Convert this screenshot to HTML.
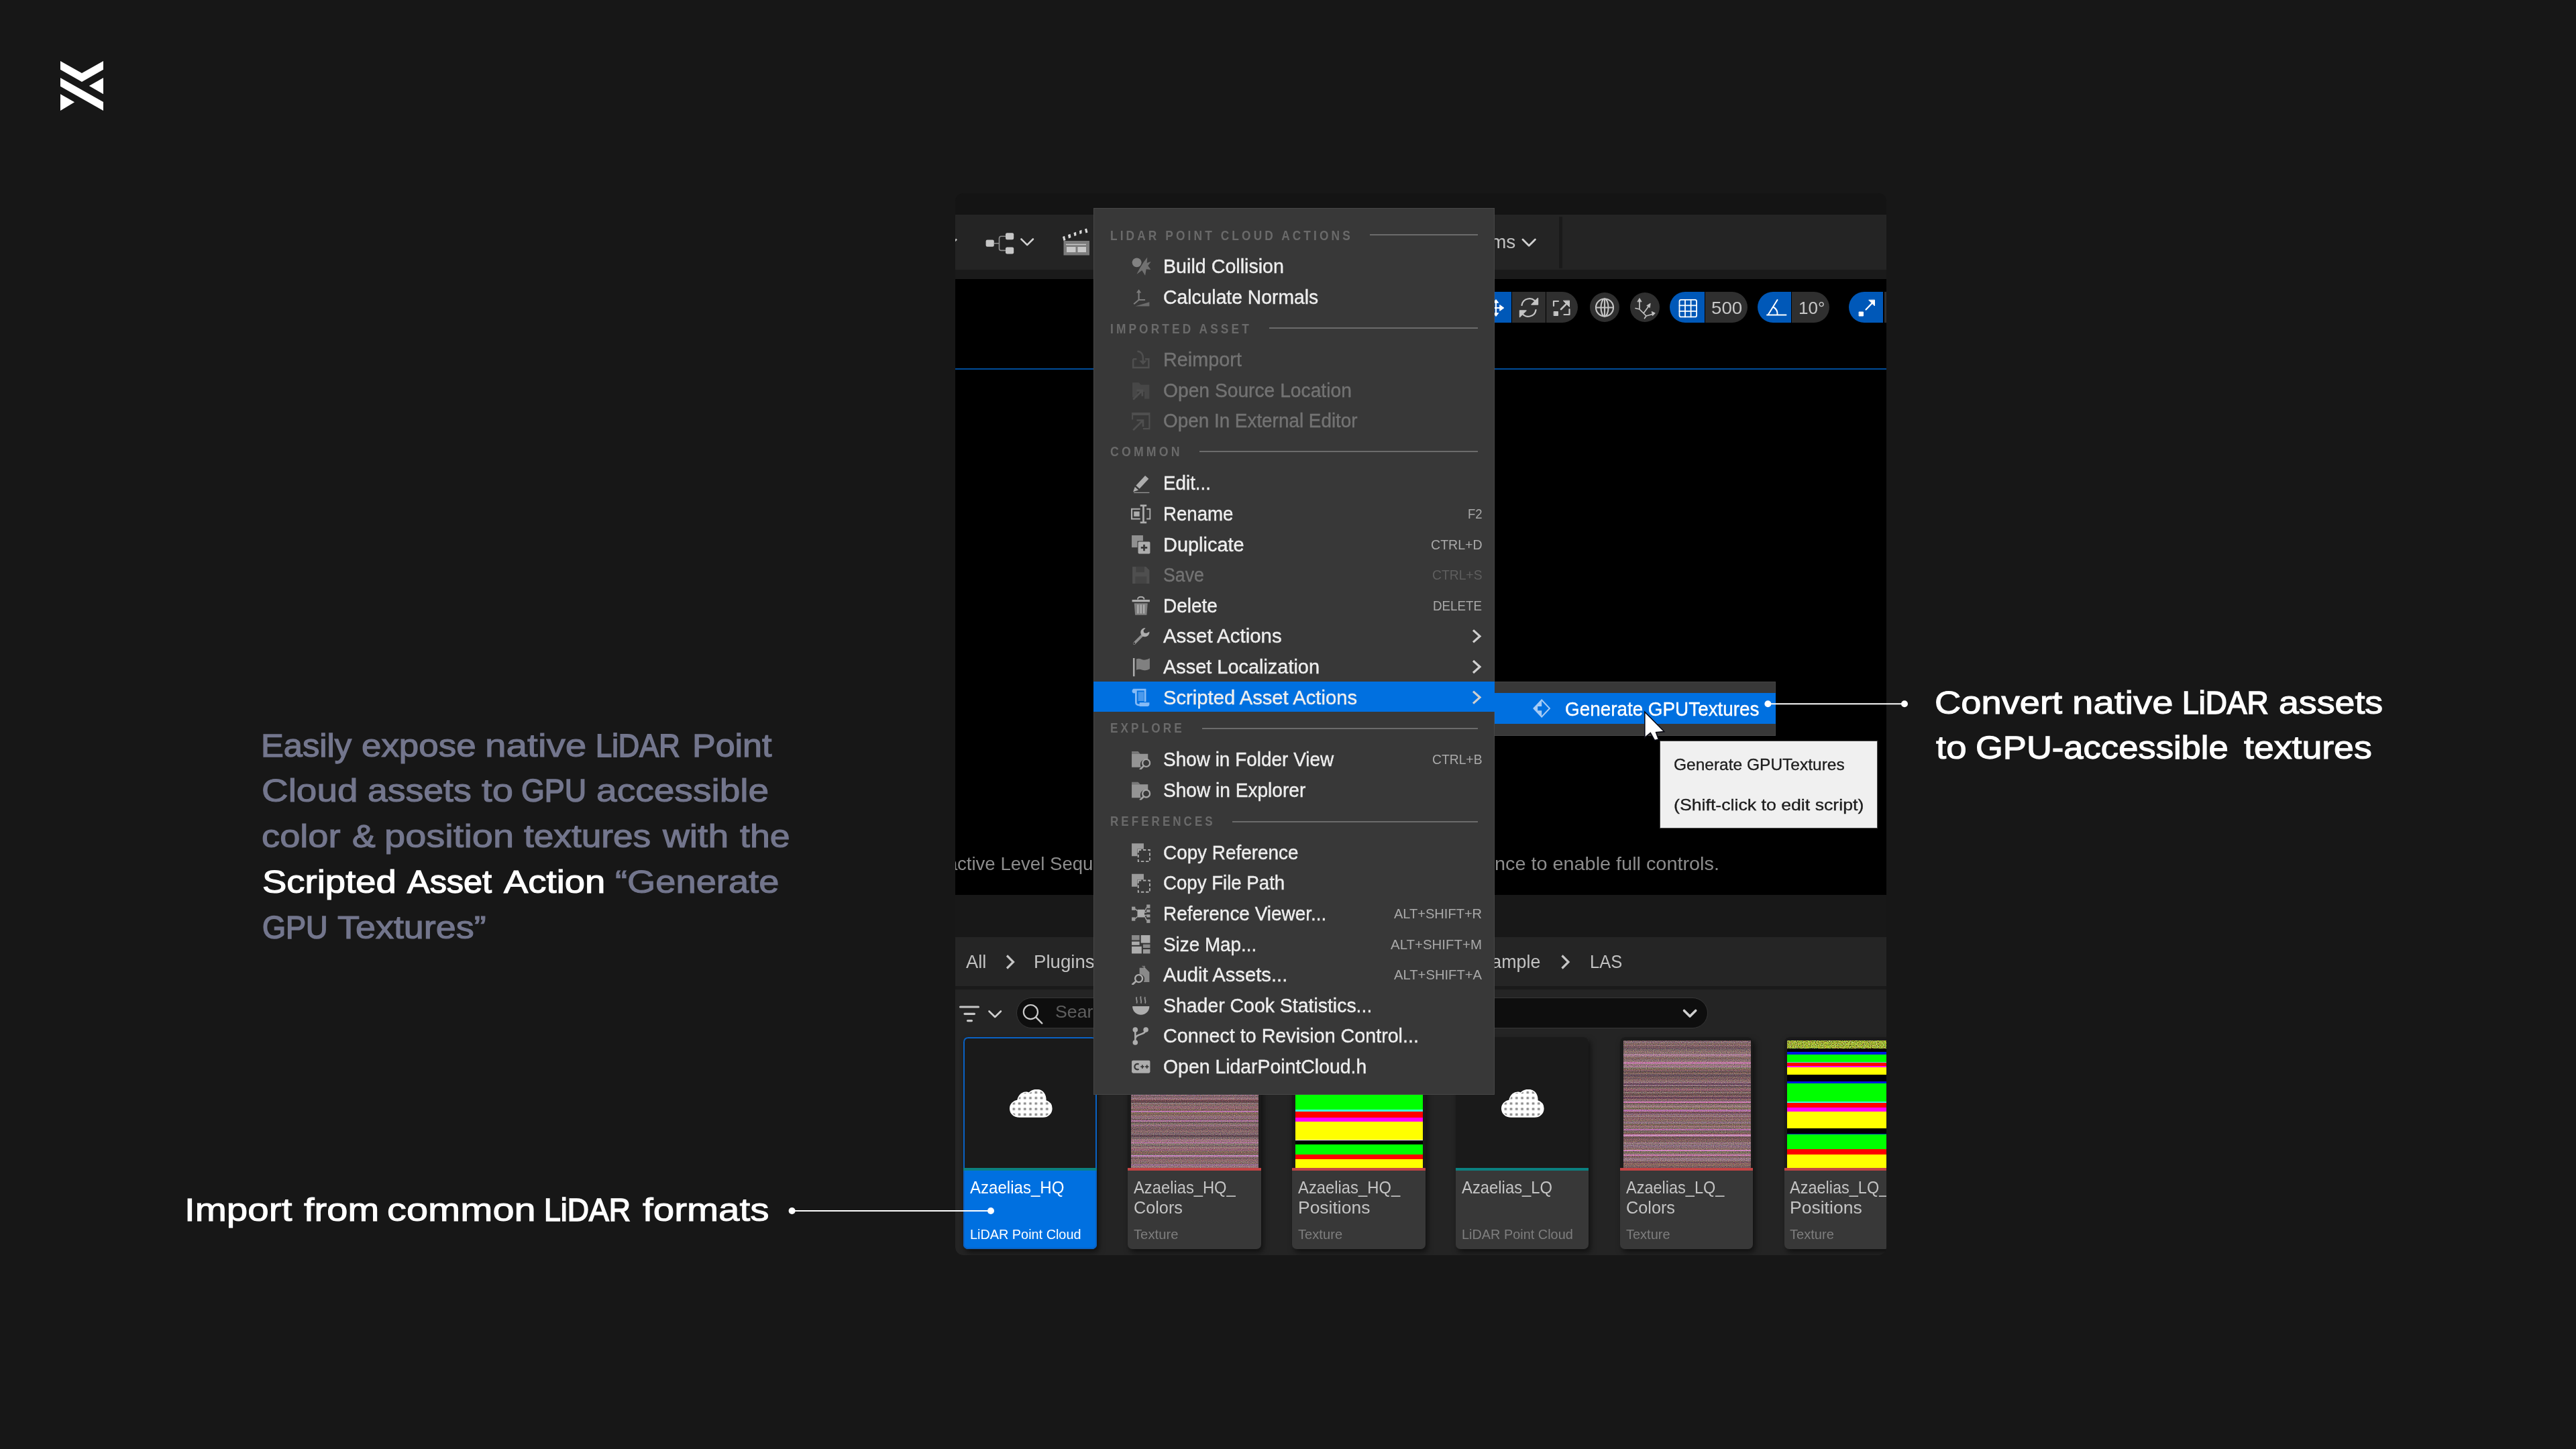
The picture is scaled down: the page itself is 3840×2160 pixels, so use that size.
<!DOCTYPE html>
<html lang="en"><head><meta charset="utf-8"><title>LiDAR Point Cloud - Generate GPU Textures</title>
<style>
html,body{margin:0;padding:0;}
body{width:3840px;height:2160px;overflow:hidden;position:relative;background:#171717;font-family:"Liberation Sans",sans-serif;}
.abs,.t,.hl,.tile,.thumb{position:absolute;}
.t{white-space:pre;line-height:1;transform-origin:0 0;margin:0;}
.hl{height:2.6px;background:#6b6b6b;}
.bm{display:inline-block;width:0;height:0;}
.tl{position:absolute;left:0;top:0;width:3840px;height:2160px;will-change:transform;}
#shot{position:absolute;left:1424px;top:288px;width:1388px;height:1583px;overflow:hidden;border-radius:12px;background:#141414;}
#shotin{position:absolute;left:-1424px;top:-288px;width:3840px;height:2160px;}
.tile{top:1546px;height:316px;border-radius:7px;background:#383838;box-shadow:3px 5px 8px rgba(0,0,0,.55);overflow:hidden;}
.thumb{left:0;top:0;right:0;height:195px;background:#1a1a1a;}
.tex{position:absolute;left:4.8px;width:190.2px;top:4.8px;height:190.2px;}
.bar{position:absolute;left:0;right:0;top:195px;height:4px;}
.vb{position:absolute;top:435.3px;height:45.8px;background:#2f2f2f;}
</style></head><body>
<svg class="abs" style="left:0;top:0" width="260" height="260" viewBox="0 0 260 260" aria-label="logo">
<g fill="#ffffff">
<polygon points="90,91.1 122,109.1 154,91.1 154,103.8 122,122 90,103.8"/>
<polygon points="90,116 154,152.1 154,165.1 90,128.7"/>
<polygon points="154,115.9 154,140.2 132.8,128"/>
<polygon points="90,140.3 90,165.1 111.1,152.3"/>
</g></svg>
<div id="shot"><div id="shotin">

<div class="abs" style="left:1424px;top:319.600px;width:1388px;height:82.200px;background:#242424"></div>
<div class="abs" style="left:2324.200px;top:322.800px;width:5px;height:77.600px;background:#1a1a1a"></div>
<div class="abs" style="left:1424px;top:401.800px;width:1388px;height:14px;background:#1a1a1a"></div>
<div class="abs" style="left:1424px;top:415.600px;width:1388px;height:918.200px;background:#000"></div>
<div class="abs" style="left:1424px;top:549.400px;width:1388px;height:1.800px;background:#004c99"></div>
<div class="abs" style="left:1424px;top:1333.800px;width:1388px;height:63.400px;background:#181818"></div>
<div class="abs" style="left:1424px;top:1397px;width:1388px;height:72.800px;background:#252525"></div>
<div class="abs" style="left:1424px;top:1469.800px;width:1388px;height:5px;background:#1a1a1a"></div>
<div class="abs" style="left:1424px;top:1474.700px;width:1388px;height:400px;background:#242424"></div>
<div class="abs" style="left:1515px;top:1487.300px;width:1030.500px;height:46px;box-sizing:border-box;border:1.600px solid #363636;border-radius:23px;background:#0e0e0e"></div>
<div class="vb" style="left:2200px;width:52.600px;background:#0058b8"></div>
<div class="vb" style="left:2254.400px;width:49.200px"></div>
<div class="vb" style="left:2305.200px;width:47px;border-radius:0 23px 23px 0"></div>
<div class="vb" style="left:2370.200px;width:43.800px;top:436.400px;height:43.800px;border-radius:22px"></div>
<div class="vb" style="left:2430.100px;width:43.800px;top:436.400px;height:43.800px;border-radius:22px"></div>
<div class="vb" style="left:2489px;width:51.500px;border-radius:23px 0 0 23px;background:#0058b8"></div>
<div class="vb" style="left:2542px;width:62.700px;border-radius:0 23px 23px 0"></div>
<div class="vb" style="left:2619.900px;width:49.900px;border-radius:23px 0 0 23px;background:#0058b8"></div>
<div class="vb" style="left:2671.400px;width:55.400px;border-radius:0 23px 23px 0"></div>
<div class="vb" style="left:2755.900px;width:51.100px;border-radius:23px 0 0 23px;background:#0058b8"></div>
<div class="vb" style="left:2808.600px;width:30px"></div>
<svg class="abs" style="left:0;top:0" width="3840" height="2160" viewBox="0 0 3840 2160" fill="none" stroke="#c4c4c4" stroke-width="2.2" stroke-linecap="round" stroke-linejoin="round">
<!-- translate (partially hidden) -->
<g stroke="#ffffff" stroke-width="2"><path d="M2226 459h11M2230 449v20"/><path d="M2236 454.800l5.800 4.200-5.800 4.200Z" fill="#fff" stroke-width="1"/><path d="M2226.500 451l3.500-4.500 3.500 4.500ZM2226.500 467l3.500 4.500 3.500-4.500Z" fill="#fff" stroke-width="1"/></g>
<!-- rotate -->
<path d="M2268.500 455a11.500 11.500 0 0 1 21-4.500M2289.500 462a11.500 11.500 0 0 1-21 4.500"/>
<path d="M2292.500 444.500v9.500h-9.500ZM2265.500 472.500v-9.500h9.500Z" fill="#c4c4c4" stroke-width="1.400"/>
<!-- scale -->
<path d="M2316 456v-7h7M2339.500 461v8h-8"/><rect x="2316.500" y="464.500" width="6" height="6" fill="#c4c4c4" stroke-width="1"/>
<path d="M2327 461l10-10" stroke-width="2.600"/><path d="M2339.500 448.500v9l-9-9Z" fill="#c4c4c4" stroke-width="1"/>
<!-- globe -->
<circle cx="2392" cy="458.500" r="13"/><ellipse cx="2392" cy="458.500" rx="5.500" ry="13"/><path d="M2379 458.500h26M2392 445.500v26"/>
<!-- surface snapping -->
<g stroke-width="1.700"><path d="M2444 461v-13M2444 461l-6-1.500M2444 461l10 10M2454 471l10.500-3M2454 471l-2.500 3.500M2450 467l8-11"/>
<path d="M2441 449.500l3-5 3 5ZM2455 455.500l5.200-3.200-.800 6ZM2462.500 464.500l4.800 2.300-3.600 3.800Z" fill="#c4c4c4" stroke-width=".800"/></g>
<!-- grid -->
<g stroke="#ffffff" stroke-width="1.800"><rect x="2503.500" y="446.800" width="25.600" height="25.600" rx="2.500"/><path d="M2512 446.800v25.600M2520.600 446.800v25.600M2503.500 455.300h25.600M2503.500 463.900h25.600"/></g>
<!-- angle -->
<g stroke="#ffffff" stroke-width="2"><path d="M2634 469.500h28.500M2635.500 469.500l14-22.500M2643 457.500a12 12 0 0 1 6.500 12"/></g>
<!-- scale snap -->
<g stroke="#ffffff" stroke-width="2.200"><rect x="2771.500" y="465" width="6" height="6" fill="#fff" stroke-width="1"/><path d="M2781.500 461.500l10.500-11"/><path d="M2794.500 447.500v8.500l-8.500-8.500Z" fill="#fff" stroke-width="1"/></g>
</svg>
<svg class="abs" style="left:0;top:0" width="3840" height="2160" viewBox="0 0 3840 2160" fill="none">
<!-- left chevron fragment -->
<path d="M1414 356.500l6 6 6-6" stroke="#c4c4c4" stroke-width="2.600"/>
<!-- blueprint tree icon -->
<g fill="#c6c6c6"><rect x="1469.600" y="357.600" width="12.200" height="10.200" rx="2.200"/><rect x="1499" y="347.200" width="12.200" height="10" rx="2.200"/><rect x="1499" y="368.400" width="12.200" height="10" rx="2.200"/></g>
<path d="M1481.800 362.700h7M1499 352.200h-6.500a3 3 0 0 0-3 3v15.200a3 3 0 0 0 3 3h6.500" stroke="#8e8e8e" stroke-width="1.600"/>
<path d="M1522.500 356.500l8.700 8.600 8.700-8.600" stroke="#d0d0d0" stroke-width="2.600" stroke-linecap="round" stroke-linejoin="round"/>
<!-- clapper -->
<rect x="1585.500" y="359" width="38.500" height="21.500" fill="#7c7c7c"/>
<path d="M1589 364.500h30" stroke="#c8c8c8" stroke-width="1.600"/>
<rect x="1590" y="368" width="13.500" height="8" fill="#c8c8c8"/><rect x="1606.500" y="368" width="12.500" height="8" fill="#c8c8c8"/>
<g fill="#d8d8d8"><polygon points="1584,353 1587,351.800 1588.500,358 1585.500,359"/><polygon points="1592,350 1595.500,348.800 1596.500,354 1593,355.500"/><polygon points="1600.500,347 1604,345.800 1604.500,351 1601.500,352"/><polygon points="1609,344 1612.500,342.800 1612.500,348 1609.500,349"/><polygon points="1617,341.500 1620,340.500 1621.500,346.500 1618.500,347.500"/></g>
<!-- Platforms chevron -->
<path d="M2270 357l9.200 9.200 9.200-9.200" stroke="#d0d0d0" stroke-width="2.800" stroke-linecap="round" stroke-linejoin="round"/>
<!-- breadcrumb chevrons -->
<g stroke="#c6c6c6" stroke-width="3.200"><path d="M1501 1424.500l9.500 9.500-9.500 9.500"/><path d="M2328.500 1424.500l9.500 9.500-9.500 9.500"/></g>
<!-- filter icon -->
<g stroke="#c6c6c6" stroke-width="3.200" stroke-linecap="round"><path d="M1431.500 1501h27M1438 1511.300h14.500M1442.500 1521.600h6"/></g>
<path d="M1474.500 1507.500l8.700 8.500 8.700-8.500" stroke="#d0d0d0" stroke-width="2.600" stroke-linecap="round" stroke-linejoin="round"/>
<!-- search glass -->
<circle cx="1536.400" cy="1508.600" r="10.600" stroke="#cacaca" stroke-width="2.200"/><path d="M1544.200 1516.400l9 9" stroke="#cacaca" stroke-width="2.400" stroke-linecap="round"/>
<!-- dropdown chevron -->
<path d="M2510.500 1506.500l8.600 8.600 8.600-8.600" stroke="#cfcfcf" stroke-width="3.600" stroke-linecap="round" stroke-linejoin="round"/>
</svg>
<div class="tile" style="left:1436.0px;width:199.0px;background:#0070e0;box-shadow:inset 0 0 0 2px #0a62c4,3px 5px 8px rgba(0,0,0,.55);"><div class="thumb"></div><div class="bar" style="background:#0b8080"></div><div class="abs" style="left:0;top:0;right:0;height:195px;border:2px solid #0a62c4;border-bottom:0;border-radius:7px 7px 0 0;box-sizing:border-box"></div></div><svg class="abs" style="left:1504.5px;top:1624px" width="64" height="42" viewBox="0 0 64 42">
<defs><pattern id="dots0" x="2.1" y="0.6" width="8.25" height="8.2" patternUnits="userSpaceOnUse"><rect width="8.25" height="8.2" fill="#ffffff"/><rect x="2.4" y="2.2" width="3.6" height="3.6" rx=".6" fill="#8c8c8c"/></pattern></defs>
<path d="M14.5 41C6.500 41 .8 35.6 .8 28.4c0-6.5 4.800-11 11.200-12.200C13.600 8 19.500 3.600 26 4.400c1 .100 2 .500 2.800 1.200C31.500 2.200 35.8.6 40.500 .6c8.500 0 13.500 6.400 13.300 16.200 5.500 1.800 9 6 9 11.600C62.800 35.500 57 41 49.600 41Z" fill="url(#dots0)" stroke="#ffffff" stroke-width="1.6"/>
</svg><div class="tile" style="left:1681.4px;width:198.3px;"><div class="thumb"><div class="tex" style="background:linear-gradient(180deg,#826c65 0.0px,#826c65 1.6px,#826659 1.6px,#826659 4.0px,#71465a 4.0px,#71465a 6.4px,#7d6a5a 6.4px,#7d6a5a 8.4px,#6a4657 8.4px,#6a4657 9.6px,#8e7369 9.6px,#8e7369 10.8px,#88695a 10.8px,#88695a 12.8px,#755b61 12.8px,#755b61 15.2px,#a07988 15.2px,#a07988 16.4px,#816664 16.4px,#816664 18.0px,#7d6c63 18.0px,#7d6c63 21.0px,#cf82be 21.0px,#cf82be 22.6px,#6e4c55 22.6px,#6e4c55 25.6px,#776962 25.6px,#776962 28.0px,#7a6661 28.0px,#7a6661 29.6px,#8b726a 29.6px,#8b726a 32.0px,#907888 32.0px,#907888 35.0px,#b67d9f 35.0px,#b67d9f 36.6px,#786665 36.6px,#786665 39.0px,#816060 39.0px,#816060 41.4px,#876967 41.4px,#876967 43.8px,#886564 43.8px,#886564 45.0px,#76685d 45.0px,#76685d 46.2px,#69494c 46.2px,#69494c 48.2px,#664958 48.2px,#664958 49.8px,#846b76 49.8px,#846b76 51.8px,#826362 51.8px,#826362 53.8px,#7f565f 53.8px,#7f565f 56.8px,#89707a 56.8px,#89707a 58.0px,#8a6e61 58.0px,#8a6e61 60.4px,#b07ca8 60.4px,#b07ca8 63.4px,#684c4d 63.4px,#684c4d 65.8px,#67494f 65.8px,#67494f 67.8px,#7a6160 67.8px,#7a6160 70.2px,#90656e 70.2px,#90656e 73.2px,#876669 73.2px,#876669 74.8px,#7f7065 74.8px,#7f7065 76.0px,#8c6d62 76.0px,#8c6d62 77.2px,#8e727f 77.2px,#8e727f 78.8px,#906d79 78.8px,#906d79 80.4px,#916e7c 80.4px,#916e7c 83.4px,#785e62 83.4px,#785e62 85.0px,#95727c 85.0px,#95727c 88.0px,#8f6865 88.0px,#8f6865 89.2px,#6a444e 89.2px,#6a444e 91.2px,#664d4e 91.2px,#664d4e 93.2px,#8d767a 93.2px,#8d767a 95.2px,#896462 95.2px,#896462 96.4px,#816a69 96.4px,#816a69 97.6px,#926771 97.6px,#926771 100.6px,#916e73 100.6px,#916e73 102.2px,#80635c 102.2px,#80635c 105.2px,#bc78b1 105.2px,#bc78b1 107.2px,#806c58 107.2px,#806c58 110.2px,#805960 110.2px,#805960 111.4px,#8f6f6a 111.4px,#8f6f6a 113.0px,#906f7d 113.0px,#906f7d 114.6px,#926474 114.6px,#926474 115.8px,#8b7277 115.8px,#8b7277 117.4px,#7b5d62 117.4px,#7b5d62 119.4px,#b277a5 119.4px,#b277a5 120.6px,#786858 120.6px,#786858 121.8px,#674b59 121.8px,#674b59 123.0px,#7d7064 123.0px,#7d7064 125.4px,#95717c 125.4px,#95717c 126.6px,#936b82 126.6px,#936b82 128.2px,#7e6164 128.2px,#7e6164 131.2px,#785b61 131.2px,#785b61 134.2px,#8b6a6c 134.2px,#8b6a6c 136.6px,#7a6466 136.6px,#7a6466 139.0px,#8f7081 139.0px,#8f7081 140.2px,#766161 140.2px,#766161 141.4px,#624852 141.4px,#624852 144.4px,#7c6769 144.4px,#7c6769 146.8px,#9a7679 146.8px,#9a7679 148.0px,#9f7385 148.0px,#9f7385 149.6px,#987379 149.6px,#987379 151.6px,#bb75ae 151.6px,#bb75ae 152.8px,#99777d 152.8px,#99777d 154.4px,#83746e 154.4px,#83746e 156.8px,#6a475b 156.8px,#6a475b 158.4px,#967877 158.4px,#967877 160.8px,#946472 160.8px,#946472 163.8px,#886478 163.8px,#886478 165.0px,#836c5b 165.0px,#836c5b 166.6px,#815c5b 166.6px,#815c5b 168.6px,#79695e 168.6px,#79695e 171.0px,#c486c0 171.0px,#c486c0 172.6px,#8b6a70 172.6px,#8b6a70 175.0px,#785e61 175.0px,#785e61 176.6px,#8e696d 176.6px,#8e696d 179.6px,#8a6e70 179.6px,#8a6e70 182.0px,#806762 182.0px,#806762 184.0px,#946e88 184.0px,#946e88 187.0px,#97787d 187.0px,#97787d 189.0px,#927075 189.0px,#927075 190.2px)"></div><svg class="abs" style="left:4.8px;top:4.8px;mix-blend-mode:overlay;opacity:.5" width="190.2" height="190.2"><rect width="190.2" height="190.2" filter="url(#grain)"/></svg></div><div class="bar" style="background:#c24444"></div></div><div class="tile" style="left:1926.3px;width:198.3px;"><div class="thumb"><div class="tex" style="background:linear-gradient(180deg,#a6bc28 0.0px,#a6bc28 11.2px,#000008 11.2px,#000008 17.2px,#0018e0 17.2px,#0018e0 21.2px,#00ff00 21.2px,#00ff00 32.2px,#40ffe0 32.2px,#40ffe0 33.6px,#ff0000 33.6px,#ff0000 38.2px,#ff00ff 38.2px,#ff00ff 40.0px,#ffff00 40.0px,#ffff00 50.7px,#000010 50.7px,#000010 62.2px,#00ff00 62.2px,#00ff00 103.0px,#40ffe0 103.0px,#40ffe0 106.2px,#ff0000 106.2px,#ff0000 114.8px,#ff00ff 114.8px,#ff00ff 120.8px,#ffff00 120.8px,#ffff00 147.7px,#fffff0 147.7px,#fffff0 149.2px,#000000 149.2px,#000000 155.3px,#00ff00 155.3px,#00ff00 170.5px,#ff0000 170.5px,#ff0000 176.8px,#ffff00 176.8px,#ffff00 190.2px)"></div><svg class="abs" style="left:4.8px;top:4.8px;mix-blend-mode:hard-light" width="190.2" height="11.8"><rect width="190.2" height="11.8" filter="url(#grain)"/></svg></div><div class="bar" style="background:#c24444"></div></div><div class="tile" style="left:2170.0px;width:198.3px;"><div class="thumb"></div><div class="bar" style="background:#0b8080"></div></div><svg class="abs" style="left:2238.0px;top:1624px" width="64" height="42" viewBox="0 0 64 42">
<defs><pattern id="dots3" x="2.1" y="0.6" width="8.25" height="8.2" patternUnits="userSpaceOnUse"><rect width="8.25" height="8.2" fill="#ffffff"/><rect x="2.4" y="2.2" width="3.6" height="3.6" rx=".6" fill="#8c8c8c"/></pattern></defs>
<path d="M14.5 41C6.500 41 .8 35.6 .8 28.4c0-6.5 4.800-11 11.200-12.200C13.600 8 19.500 3.600 26 4.400c1 .100 2 .500 2.800 1.200C31.500 2.200 35.8.6 40.500 .6c8.500 0 13.500 6.400 13.300 16.200 5.500 1.800 9 6 9 11.600C62.800 35.500 57 41 49.600 41Z" fill="url(#dots3)" stroke="#ffffff" stroke-width="1.6"/>
</svg><div class="tile" style="left:2414.8px;width:198.3px;"><div class="thumb"><div class="tex" style="background:linear-gradient(180deg,#694f54 0.0px,#694f54 1.2px,#896f76 1.2px,#896f76 4.2px,#806660 4.2px,#806660 7.2px,#98727e 7.2px,#98727e 8.4px,#775b5f 8.4px,#775b5f 10.8px,#694a5c 10.8px,#694a5c 12.4px,#776465 12.4px,#776465 15.4px,#8b6f6d 15.4px,#8b6f6d 18.4px,#8c7272 18.4px,#8c7272 20.8px,#cc8fc0 20.8px,#cc8fc0 22.4px,#98767d 22.4px,#98767d 25.4px,#80655f 25.4px,#80655f 28.4px,#856c71 28.4px,#856c71 30.4px,#907472 30.4px,#907472 32.4px,#bd79a4 32.4px,#bd79a4 35.4px,#927678 35.4px,#927678 37.8px,#b3719f 37.8px,#b3719f 39.4px,#937c7c 39.4px,#937c7c 41.4px,#7b6d5b 41.4px,#7b6d5b 43.4px,#81605c 43.4px,#81605c 44.6px,#856275 44.6px,#856275 45.8px,#63504a 45.8px,#63504a 47.8px,#876863 47.8px,#876863 50.2px,#755f62 50.2px,#755f62 51.4px,#654e58 51.4px,#654e58 53.8px,#7d6260 53.8px,#7d6260 56.8px,#6e4c59 56.8px,#6e4c59 58.0px,#8a6c6a 58.0px,#8a6c6a 61.0px,#907079 61.0px,#907079 64.0px,#634358 64.0px,#634358 66.0px,#91737f 66.0px,#91737f 67.6px,#654b52 67.6px,#654b52 70.0px,#806863 70.0px,#806863 72.4px,#946471 72.4px,#946471 74.8px,#654350 74.8px,#654350 76.0px,#846962 76.0px,#846962 77.2px,#86716f 77.2px,#86716f 78.8px,#6b504f 78.8px,#6b504f 81.8px,#816066 81.8px,#816066 83.0px,#957172 83.0px,#957172 84.2px,#6a465a 84.2px,#6a465a 86.6px,#846658 86.6px,#846658 87.8px,#936a79 87.8px,#936a79 89.0px,#7d6266 89.0px,#7d6266 91.4px,#d083b8 91.4px,#d083b8 93.0px,#704c4f 93.0px,#704c4f 94.2px,#776f5f 94.2px,#776f5f 95.4px,#856869 95.4px,#856869 97.4px,#9d7b81 97.4px,#9d7b81 100.4px,#7e6d58 100.4px,#7e6d58 102.8px,#b372a9 102.8px,#b372a9 105.8px,#87625c 105.8px,#87625c 107.4px,#704d56 107.4px,#704d56 108.6px,#8d6c7f 108.6px,#8d6c7f 111.0px,#8a685f 111.0px,#8a685f 112.2px,#977883 112.2px,#977883 113.8px,#846062 113.8px,#846062 116.8px,#936a76 116.8px,#936a76 118.4px,#856b60 118.4px,#856b60 120.4px,#876a6e 120.4px,#876a6e 121.6px,#907686 121.6px,#907686 124.0px,#7b6356 124.0px,#7b6356 127.0px,#9c727b 127.0px,#9c727b 129.4px,#866c68 129.4px,#866c68 131.8px,#b470ab 131.8px,#b470ab 134.2px,#77645e 134.2px,#77645e 136.6px,#786f60 136.6px,#786f60 137.8px,#80565a 137.8px,#80565a 140.2px,#c98cb8 140.2px,#c98cb8 143.2px,#705455 143.2px,#705455 144.8px,#64514d 144.8px,#64514d 146.4px,#805c61 146.4px,#805c61 149.4px,#7f625e 149.4px,#7f625e 151.8px,#997888 151.8px,#997888 153.8px,#86705e 153.8px,#86705e 155.0px,#8b6f80 155.0px,#8b6f80 158.0px,#8b6b75 158.0px,#8b6b75 161.0px,#846b5c 161.0px,#846b5c 163.4px,#cf85bf 163.4px,#cf85bf 165.4px,#7a6e5c 165.4px,#7a6e5c 167.8px,#8b7170 167.8px,#8b7170 169.8px,#c77cac 169.8px,#c77cac 171.8px,#7e6262 171.8px,#7e6262 173.4px,#826064 173.4px,#826064 175.4px,#927781 175.4px,#927781 177.4px,#957681 177.4px,#957681 179.8px,#846c5e 179.8px,#846c5e 181.0px,#694257 181.0px,#694257 182.2px,#866969 182.2px,#866969 183.4px,#89635e 183.4px,#89635e 185.0px,#876b62 185.0px,#876b62 186.6px,#816164 186.6px,#816164 187.8px,#735a5d 187.8px,#735a5d 189.8px,#88686c 189.8px,#88686c 190.2px)"></div><svg class="abs" style="left:4.8px;top:4.8px;mix-blend-mode:overlay;opacity:.5" width="190.2" height="190.2"><rect width="190.2" height="190.2" filter="url(#grain)"/></svg></div><div class="bar" style="background:#c24444"></div></div><div class="tile" style="left:2659.6px;width:198.3px;"><div class="thumb"><div class="tex" style="background:linear-gradient(180deg,#a6bc28 0.0px,#a6bc28 11.9px,#000008 11.9px,#000008 17.4px,#0018e0 17.4px,#0018e0 21.0px,#00ff00 21.0px,#00ff00 31.9px,#40ffe0 31.9px,#40ffe0 33.2px,#ff0000 33.2px,#ff0000 37.8px,#ff00ff 37.8px,#ff00ff 40.0px,#ffff00 40.0px,#ffff00 51.0px,#000004 51.0px,#000004 61.0px,#0018e0 61.0px,#0018e0 64.4px,#00ff00 64.4px,#00ff00 90.6px,#40ffe0 90.6px,#40ffe0 92.6px,#ff0000 92.6px,#ff0000 100.0px,#ff00ff 100.0px,#ff00ff 105.7px,#ffff00 105.7px,#ffff00 131.1px,#000000 131.1px,#000000 138.8px,#0018c0 138.8px,#0018c0 140.2px,#00ff00 140.2px,#00ff00 162.2px,#ff0000 162.2px,#ff0000 170.2px,#ffff00 170.2px,#ffff00 190.2px)"></div><svg class="abs" style="left:4.8px;top:4.8px;mix-blend-mode:hard-light" width="190.2" height="11.8"><rect width="190.2" height="11.8" filter="url(#grain)"/></svg></div><div class="bar" style="background:#c24444"></div></div>

<div class="tl"><span id="t73" class="t " style="left:2141.00px;top:347.0px;font-size:27.5px;color:#c0c0c0;transform:scaleX(1.0186);">Platforms</span>
<span id="t74" class="t " style="left:2550.60px;top:446.0px;font-size:26.5px;color:#c8c8c8;transform:scaleX(1.0448);">500</span>
<span id="t75" class="t " style="left:2680.60px;top:446.0px;font-size:26.5px;color:#c8c8c8;transform:scaleX(0.9831);">10°</span>
<span id="t76" class="t " style="left:1411.50px;top:1273.0px;font-size:28.5px;color:#8c8c8c;">a</span>
<span id="t77" class="t " style="left:1427.20px;top:1273.0px;font-size:28.5px;color:#8c8c8c;transform:scaleX(0.9678);">ctive Level Sequ</span>
<span id="t78" class="t " style="left:2227.80px;top:1273.0px;font-size:28.5px;color:#8c8c8c;transform:scaleX(1.0114);">nce to enable full controls.</span>
<span id="t79" class="t " style="left:1440.40px;top:1420.0px;font-size:28px;color:#c2c2c2;transform:scaleX(0.9735);">All</span>
<span id="t80" class="t " style="left:1541.40px;top:1420.0px;font-size:28px;color:#c2c2c2;transform:scaleX(0.9865);">Plugins</span>
<span id="t81" class="t " style="left:2192.00px;top:1420.0px;font-size:28px;color:#c2c2c2;transform:scaleX(0.9574);">Example</span>
<span id="t82" class="t " style="left:2369.60px;top:1420.0px;font-size:28px;color:#c2c2c2;transform:scaleX(0.9124);">LAS</span>
<span id="t83" class="t " style="left:1572.60px;top:1496.0px;font-size:25.5px;color:#5e5e5e;transform:scaleX(1.0490);">Search LAS</span>
<span id="t84" class="t " style="left:1445.50px;top:1758.0px;font-size:25.5px;color:#ffffff;transform:scaleX(0.9440);">Azaelias_HQ</span>
<span id="t85" class="t " style="left:1445.50px;top:1829.0px;font-size:21px;color:#ffffff;transform:scaleX(0.9452);">LiDAR Point Cloud</span>
<span id="t86" class="t " style="left:1689.80px;top:1758.0px;font-size:25.5px;color:#c4c4c4;transform:scaleX(0.9313);">Azaelias_HQ_</span>
<span id="t87" class="t " style="left:1689.80px;top:1788.0px;font-size:25.5px;color:#c4c4c4;transform:scaleX(0.9893);">Colors</span>
<span id="t88" class="t " style="left:1689.80px;top:1829.0px;font-size:21px;color:#7e7e7e;transform:scaleX(0.9641);">Texture</span>
<span id="t89" class="t " style="left:1934.80px;top:1758.0px;font-size:25.5px;color:#c4c4c4;transform:scaleX(0.9337);">Azaelias_HQ_</span>
<span id="t90" class="t " style="left:1934.80px;top:1788.0px;font-size:25.5px;color:#c4c4c4;transform:scaleX(1.0378);">Positions</span>
<span id="t91" class="t " style="left:1934.80px;top:1829.0px;font-size:21px;color:#7e7e7e;transform:scaleX(0.9597);">Texture</span>
<span id="t92" class="t " style="left:2178.60px;top:1758.0px;font-size:25.5px;color:#c4c4c4;transform:scaleX(0.9343);">Azaelias_LQ</span>
<span id="t93" class="t " style="left:2178.60px;top:1829.0px;font-size:21px;color:#7e7e7e;transform:scaleX(0.9469);">LiDAR Point Cloud</span>
<span id="t94" class="t " style="left:2423.60px;top:1758.0px;font-size:25.5px;color:#c4c4c4;transform:scaleX(0.9215);">Azaelias_LQ_</span>
<span id="t95" class="t " style="left:2423.60px;top:1788.0px;font-size:25.5px;color:#c4c4c4;transform:scaleX(0.9907);">Colors</span>
<span id="t96" class="t " style="left:2423.60px;top:1829.0px;font-size:21px;color:#7e7e7e;transform:scaleX(0.9510);">Texture</span>
<span id="t97" class="t " style="left:2668.30px;top:1758.0px;font-size:25.5px;color:#c4c4c4;transform:scaleX(0.9209);">Azaelias_LQ_</span>
<span id="t98" class="t " style="left:2668.30px;top:1788.0px;font-size:25.5px;color:#c4c4c4;transform:scaleX(1.0407);">Positions</span>
<span id="t99" class="t " style="left:2668.30px;top:1829.0px;font-size:21px;color:#7e7e7e;transform:scaleX(0.9568);">Texture</span></div>
</div></div>
<svg width="0" height="0" style="position:absolute"><defs>
<filter id="grain" x="0" y="0" width="100%" height="100%" color-interpolation-filters="sRGB"><feTurbulence type="fractalNoise" baseFrequency="0.9 0.8" numOctaves="1" seed="7"/><feColorMatrix type="matrix" values="1.5 .5 0 0 -0.5  .6 1.4 0 0 -0.5  .6 .5 .9 0 -0.5  0 0 0 0 1"/></filter>
<symbol id="i-collision" viewBox="0 0 28 28"><path d="M17.500 8.500l5.500-7.500-.500 8 6-2-4.500 6 4 5.500-6.500-.500-1.500 9-4.500-7.500-7.500 5.500 4.500-8.500Z" fill="currentColor" opacity=".78"/><circle cx="8.200" cy="8.500" r="6.600" fill="currentColor"/></symbol>
<symbol id="i-normals" viewBox="0 0 28 28"><path d="M11 3l3.500 5h-2.500v10h-2v-10h-2.500Z" fill="currentColor"/><path d="M11 18l-7 6M11 18h9" stroke="currentColor" stroke-width="2" fill="none"/><path d="M6 27l20-6v6Z" fill="currentColor" opacity=".75"/></symbol>
<symbol id="i-reimport" viewBox="0 0 28 28"><path d="M3 13v12h22v-12h-5M8 13h-5" stroke="currentColor" stroke-width="2.400" fill="none"/><path d="M9 2c6 0 8 5 8 10v5" stroke="currentColor" stroke-width="2.400" fill="none"/><path d="M11.500 15h11l-5.500 6Z" fill="currentColor"/></symbol>
<symbol id="i-opensrc" viewBox="0 0 28 28"><path d="M2 3h9l3 3h12v20h-7v-10h-10v8h-7Z" fill="currentColor" opacity=".7"/><path d="M3 27l12-12M8 14h8v8" stroke="currentColor" stroke-width="2.600" fill="none"/></symbol>
<symbol id="i-openext" viewBox="0 0 28 28"><path d="M2 12v-9h24v22h-9" stroke="currentColor" stroke-width="2" fill="none"/><path d="M2 3h24v3h-24Z" fill="currentColor"/><path d="M3 27l13-13M8 13h9v9" stroke="currentColor" stroke-width="2.600" fill="none"/></symbol>
<symbol id="i-edit" viewBox="0 0 28 28"><path d="M7 17l13-14 5 4.500-13 14Z" fill="currentColor"/><path d="M5.500 19l5 4.500-7.500 2.500Z" fill="currentColor"/><path d="M4 27.300h22" stroke="currentColor" stroke-width="1.400" opacity=".8"/></symbol>
<symbol id="i-rename" viewBox="0 0 28 28"><path d="M13 7h-12v14h12M22 7h5v14h-5" stroke="currentColor" stroke-width="2" fill="none"/><rect x="4" y="10.500" width="8" height="7" fill="currentColor"/><path d="M13 2h9M13 26h9M17.500 2v24" stroke="currentColor" stroke-width="2.600" fill="none"/></symbol>
<symbol id="i-duplicate" viewBox="0 0 28 28"><path d="M1 1h16v8h-8v9h-8Z" fill="currentColor" opacity=".75"/><rect x="10" y="10" width="17" height="17" rx="1.500" fill="currentColor"/><path d="M18.500 14v9M14 18.500h9" stroke="#383838" stroke-width="2.600"/></symbol>
<symbol id="i-save" viewBox="0 0 28 28"><path d="M2 2h19l5 5v19h-24Z" fill="currentColor"/><rect x="7" y="2" width="12" height="8" fill="#383838" opacity=".55"/><rect x="6" y="16" width="16" height="10" fill="#383838" opacity=".45"/></symbol>
<symbol id="i-delete" viewBox="0 0 28 28"><path d="M1.500 5.500h25v3h-25Z" fill="currentColor"/><path d="M9.500 5c0-2.500 1.500-3.500 4.500-3.500s4.500 1 4.500 3.500" fill="none" stroke="currentColor" stroke-width="1.800"/><path d="M4.500 10.500h19l-1.300 16.500h-16.400Z" fill="currentColor" opacity=".62"/><path d="M9.800 12.500v12.500M14 12.500v12.500M18.200 12.500v12.500" stroke="currentColor" stroke-width="2.200"/></symbol>
<symbol id="i-wrench" viewBox="0 0 28 28"><path d="M4.500 24l13-13" stroke="currentColor" stroke-width="3.600" stroke-linecap="round" opacity=".75"/><path d="M26 7.500a6.300 6.300 0 1 1-5.500-5.300l-3 3.600.800 3.200 3.200.800Z" fill="currentColor"/><circle cx="4.500" cy="24" r="1.400" fill="#383838"/></symbol>
<symbol id="i-flag" viewBox="0 0 28 28"><path d="M4 1.500v26" stroke="currentColor" stroke-width="2.400"/><path d="M7.500 3c5-2.500 8 2 13 1 2-.400 4-1.200 6-2.200v15c-5 3-8 2-12 1-3-.800-5-.500-7 .500Z" fill="currentColor" opacity=".62"/></symbol>
<symbol id="i-script" viewBox="0 0 28 28"><path d="M3 3h17v17M7 3v18a3.500 3.500 0 0 0 3.500 3.500h14" stroke="currentColor" stroke-width="2.600" fill="none"/><path d="M10 6h8v13h-8Z" fill="currentColor" opacity=".55"/><path d="M12 21h14v2.500a3 3 0 0 1-3 3h-11Z" fill="currentColor"/><circle cx="4.500" cy="5" r="3" fill="currentColor"/></symbol>
<symbol id="i-folderfind" viewBox="0 0 28 28"><path d="M1 2.500h9l3 3.500h-12Z" fill="currentColor" opacity=".6"/><path d="M1 6h23v8c-7-2-13 3-10 11h-13Z" fill="currentColor" opacity=".85"/><circle cx="21.500" cy="19" r="5.200" stroke="currentColor" stroke-width="2.200" fill="none"/><path d="M18 23l-5.500 5.500" stroke="currentColor" stroke-width="2.600"/></symbol>
<symbol id="i-copy" viewBox="0 0 28 28"><path d="M1 1h17v18h-17Z" fill="currentColor" opacity=".85"/><rect x="9" y="9" width="18.500" height="18.500" fill="#383838"/><rect x="10.200" y="10.200" width="16.300" height="16.300" stroke="currentColor" stroke-width="1.800" stroke-dasharray="4.200 2.600" fill="none"/></symbol>
<symbol id="i-refviewer" viewBox="0 0 28 28"><rect x="9" y="8" width="10" height="11" fill="currentColor"/><g fill="currentColor" opacity=".85"><rect x="1" y="4" width="5" height="5"/><rect x="1" y="19" width="5" height="5"/><rect x="22" y="1" width="5" height="5"/><rect x="22" y="8" width="5" height="4"/><rect x="22" y="15" width="5" height="4"/><rect x="22" y="22" width="5" height="5"/></g><path d="M6 7l3 3M6 21l3-3M19 11l3-6M19 12h3M19 16h3M19 17l3 6" stroke="currentColor" stroke-width="1.200"/></symbol>
<symbol id="i-sizemap" viewBox="0 0 28 28"><g fill="currentColor"><rect x="1" y="1" width="11" height="7" opacity=".7"/><rect x="14" y="1" width="13" height="11"/><rect x="1" y="10" width="11" height="5"/><rect x="1" y="17" width="14" height="10"/><rect x="17" y="14" width="10" height="5" opacity=".7"/><rect x="17" y="21" width="10" height="6" opacity=".85"/></g></symbol>
<symbol id="i-audit" viewBox="0 0 28 28"><path d="M12 4h8l6 6v14h-8c3-5 0-11-6-11Z" fill="currentColor" opacity=".7"/><path d="M15 1h5v5" fill="currentColor" opacity=".5"/><circle cx="11" cy="19" r="5.200" stroke="currentColor" stroke-width="2.300" fill="none"/><path d="M7 23l-5.500 5" stroke="currentColor" stroke-width="2.600"/></symbol>
<symbol id="i-shader" viewBox="0 0 28 28"><path d="M2 15h24c0 7-5 12-12 12s-12-5-12-12Z" fill="currentColor"/><path d="M8 2c-2 3 2 5 0 9M14 1c-2 3 2 6 0 10M20 2c-2 3 2 5 0 9" stroke="currentColor" stroke-width="1.800" fill="none" opacity=".75"/></symbol>
<symbol id="i-branch" viewBox="0 0 28 28"><circle cx="6" cy="5" r="3.600" fill="currentColor"/><circle cx="6" cy="23" r="3.600" fill="currentColor"/><circle cx="21" cy="5" r="3.600" fill="currentColor"/><path d="M6 5v18M21 5c0 8-15 5-15 13" stroke="currentColor" stroke-width="2.400" fill="none"/></symbol>
<symbol id="i-cpp" viewBox="0 0 28 28"><rect x="1" y="5" width="26" height="18" rx="2" fill="currentColor"/><path d="M11 10.500a4 4 0 1 0 0 7" stroke="#383838" stroke-width="2.200" fill="none"/><path d="M13.500 14h5M16 11.500v5M20 14h5M22.500 11.500v5" stroke="#383838" stroke-width="1.800"/></symbol>
<symbol id="i-bp" viewBox="0 0 26 28"><path d="M13 1.500l11.800 12.500-11.800 12.500-11.800-12.500Z" fill="none" stroke="currentColor" stroke-width="2"/><path d="M1.200 14l11.800-12.500v9.500h-6v6.200h6v9.300Z" fill="currentColor"/></symbol>
</defs></svg>
<div class="abs" id="menu" style="left:1630px;top:309.500px;width:598px;height:1322.300px;box-sizing:border-box;background:#383838;border:1.500px solid #474747"></div>
<div class="abs" style="left:1630px;top:1016.200px;width:598px;height:44.700px;background:#0070e0"></div>
<div class="abs" id="submenu" style="left:2228px;top:1016.300px;width:418.600px;height:81px;box-sizing:border-box;background:#383838;border:1.500px solid #444;border-left:0"></div>
<div class="abs" style="left:2228px;top:1033px;width:418.600px;height:45.800px;background:#0070e0"></div>
<div class="abs" id="tooltip" style="left:2473.600px;top:1104.400px;width:325.600px;height:130.400px;box-sizing:border-box;background:#f0f0f0;border:1.600px solid #474747;box-shadow:2px 2px 5px rgba(0,0,0,.6)"></div>
<div class="hl" style="left:2042.2px;top:348.7px;width:160.8px"></div><div class="hl" style="left:1892.2px;top:487.7px;width:310.8px"></div><div class="hl" style="left:1787.6px;top:671.8px;width:415.4px"></div><div class="hl" style="left:1792.2px;top:1084.6px;width:410.8px"></div><div class="hl" style="left:1837.0px;top:1223.5px;width:366.0px"></div>
<svg class="abs" style="left:0;top:0" width="3840" height="2160" viewBox="0 0 3840 2160" fill="none">
<polyline points="2196,939.4 2206,948.4 2196,957.4" fill="none" stroke="#cfcfcf" stroke-width="3.2"/><polyline points="2196,985.0 2206,994.0 2196,1003.0" fill="none" stroke="#cfcfcf" stroke-width="3.2"/><polyline points="2196,1030.6 2206,1039.6 2196,1048.6" fill="none" stroke="#cfcfcf" stroke-width="3.2"/>
<use href="#i-collision" x="1686" y="382.4" width="29.5" height="29.5" color="#828282"/><use href="#i-normals" x="1686" y="428.0" width="29.5" height="29.5" color="#7c7c7c"/><use href="#i-reimport" x="1686" y="521.6" width="29.5" height="29.5" color="#4f4f4f"/><use href="#i-opensrc" x="1686" y="567.2" width="29.5" height="29.5" color="#4f4f4f"/><use href="#i-openext" x="1686" y="612.8" width="29.5" height="29.5" color="#4f4f4f"/><use href="#i-edit" x="1686" y="705.8" width="29.5" height="29.5" color="#adadad"/><use href="#i-rename" x="1686" y="751.4" width="29.5" height="29.5" color="#adadad"/><use href="#i-duplicate" x="1686" y="797.0" width="29.5" height="29.5" color="#adadad"/><use href="#i-save" x="1686" y="842.6" width="29.5" height="29.5" color="#4f4f4f"/><use href="#i-delete" x="1686" y="888.2" width="29.5" height="29.5" color="#adadad"/><use href="#i-wrench" x="1686" y="933.8" width="29.5" height="29.5" color="#adadad"/><use href="#i-flag" x="1686" y="979.4" width="29.5" height="29.5" color="#adadad"/><use href="#i-script" x="1686" y="1025.0" width="29.5" height="29.5" color="#86bbf6"/><use href="#i-folderfind" x="1686" y="1117.4" width="29.5" height="29.5" color="#a4a4a4"/><use href="#i-folderfind" x="1686" y="1163.0" width="29.5" height="29.5" color="#a4a4a4"/><use href="#i-copy" x="1686" y="1256.2" width="29.5" height="29.5" color="#adadad"/><use href="#i-copy" x="1686" y="1301.8" width="29.5" height="29.5" color="#adadad"/><use href="#i-refviewer" x="1686" y="1347.4" width="29.5" height="29.5" color="#adadad"/><use href="#i-sizemap" x="1686" y="1393.0" width="29.5" height="29.5" color="#adadad"/><use href="#i-audit" x="1686" y="1438.6" width="29.5" height="29.5" color="#adadad"/><use href="#i-shader" x="1686" y="1484.2" width="29.5" height="29.5" color="#adadad"/><use href="#i-branch" x="1686" y="1529.8" width="29.5" height="29.5" color="#adadad"/><use href="#i-cpp" x="1686" y="1575.4" width="29.5" height="29.5" color="#adadad"/>
<use href="#i-bp" x="2285.200" y="1042" width="26" height="28" color="#a6cbf5"/>
</svg>

<div class="tl"><span id="t0" class="t " style="left:388.95px;top:1087.0px;font-size:49px;color:#73768d;-webkit-text-stroke:1.37px #73768d;transform:scaleX(1.0340);">Easily</span>
<span id="t1" class="t " style="left:539.36px;top:1087.0px;font-size:49px;color:#73768d;-webkit-text-stroke:1.24px #73768d;transform:scaleX(1.0795);">expose</span>
<span id="t2" class="t " style="left:723.33px;top:1087.0px;font-size:49px;color:#73768d;-webkit-text-stroke:1.01px #73768d;transform:scaleX(1.1580);">native</span>
<span id="t3" class="t " style="left:888.25px;top:1087.0px;font-size:49px;color:#73768d;-webkit-text-stroke:1.8px #73768d;transform:scaleX(0.8869);">LiDAR</span>
<span id="t4" class="t " style="left:1031.70px;top:1087.0px;font-size:49px;color:#73768d;-webkit-text-stroke:1.29px #73768d;transform:scaleX(1.0605);">Point</span>
<span id="t5" class="t " style="left:390.12px;top:1154.0px;font-size:49px;color:#73768d;-webkit-text-stroke:1.12px #73768d;transform:scaleX(1.1204);">Cloud</span>
<span id="t6" class="t " style="left:547.71px;top:1154.0px;font-size:49px;color:#73768d;-webkit-text-stroke:1.2px #73768d;transform:scaleX(1.0926);">assets</span>
<span id="t7" class="t " style="left:717.51px;top:1154.0px;font-size:49px;color:#73768d;-webkit-text-stroke:1.03px #73768d;transform:scaleX(1.1478);">to</span>
<span id="t8" class="t " style="left:777.43px;top:1154.0px;font-size:49px;color:#73768d;-webkit-text-stroke:1.72px #73768d;transform:scaleX(0.9135);">GPU</span>
<span id="t9" class="t " style="left:888.51px;top:1154.0px;font-size:49px;color:#73768d;-webkit-text-stroke:1.11px #73768d;transform:scaleX(1.1240);">accessible</span>
<span id="t10" class="t " style="left:390.16px;top:1222.0px;font-size:49px;color:#73768d;-webkit-text-stroke:1.15px #73768d;transform:scaleX(1.1074);">color</span>
<span id="t11" class="t " style="left:524.87px;top:1222.0px;font-size:49px;color:#73768d;-webkit-text-stroke:1.27px #73768d;transform:scaleX(1.0623);">&amp;</span>
<span id="t12" class="t " style="left:573.39px;top:1222.0px;font-size:49px;color:#73768d;-webkit-text-stroke:1.05px #73768d;transform:scaleX(1.1437);">position</span>
<span id="t13" class="t " style="left:781.21px;top:1222.0px;font-size:49px;color:#73768d;-webkit-text-stroke:1.22px #73768d;transform:scaleX(1.0855);">textures</span>
<span id="t14" class="t " style="left:988.18px;top:1222.0px;font-size:49px;color:#73768d;-webkit-text-stroke:1.1px #73768d;transform:scaleX(1.1259);">with</span>
<span id="t15" class="t " style="left:1102.60px;top:1222.0px;font-size:49px;color:#73768d;-webkit-text-stroke:1.19px #73768d;transform:scaleX(1.0949);">the</span>
<span id="t16" class="t " style="left:390.75px;top:1290.0px;font-size:49px;color:#ffffff;-webkit-text-stroke:1.14px #ffffff;transform:scaleX(1.1120);">Scripted</span>
<span id="t17" class="t " style="left:606.79px;top:1290.0px;font-size:49px;color:#ffffff;-webkit-text-stroke:1.38px #ffffff;transform:scaleX(1.0292);">Asset</span>
<span id="t18" class="t " style="left:750.77px;top:1290.0px;font-size:49px;color:#ffffff;-webkit-text-stroke:1.14px #ffffff;transform:scaleX(1.1114);">Action</span>
<span id="t19" class="t " style="left:916.77px;top:1290.0px;font-size:49px;color:#73768d;-webkit-text-stroke:1.16px #73768d;transform:scaleX(1.1075);">“Generate</span>
<span id="t20" class="t " style="left:390.81px;top:1358.0px;font-size:49px;color:#73768d;-webkit-text-stroke:1.7px #73768d;transform:scaleX(0.9197);">GPU</span>
<span id="t21" class="t " style="left:502.79px;top:1358.0px;font-size:49px;color:#73768d;-webkit-text-stroke:1.18px #73768d;transform:scaleX(1.1001);">Textures”</span>
<span id="t22" class="t " style="left:2884.16px;top:1023.0px;font-size:49px;color:#ffffff;-webkit-text-stroke:1.15px #ffffff;transform:scaleX(1.1076);">Convert</span>
<span id="t23" class="t " style="left:3088.56px;top:1023.0px;font-size:49px;color:#ffffff;-webkit-text-stroke:1.02px #ffffff;transform:scaleX(1.1516);">native</span>
<span id="t24" class="t " style="left:3252.53px;top:1023.0px;font-size:49px;color:#ffffff;-webkit-text-stroke:1.74px #ffffff;transform:scaleX(0.9094);">LiDAR</span>
<span id="t25" class="t " style="left:3396.90px;top:1023.0px;font-size:49px;color:#ffffff;-webkit-text-stroke:1.19px #ffffff;transform:scaleX(1.0955);">assets</span>
<span id="t26" class="t " style="left:2886.37px;top:1090.0px;font-size:49px;color:#ffffff;-webkit-text-stroke:1.13px #ffffff;transform:scaleX(1.1150);">to</span>
<span id="t27" class="t " style="left:2945.09px;top:1090.0px;font-size:49px;color:#ffffff;-webkit-text-stroke:1.26px #ffffff;transform:scaleX(1.0724);">GPU-accessible</span>
<span id="t28" class="t " style="left:3344.79px;top:1090.0px;font-size:49px;color:#ffffff;-webkit-text-stroke:1.19px #ffffff;transform:scaleX(1.0944);">textures</span>
<span id="t29" class="t " style="left:275.09px;top:1779.0px;font-size:49px;color:#ffffff;-webkit-text-stroke:1.02px #ffffff;transform:scaleX(1.1547);">Import</span>
<span id="t30" class="t " style="left:452.72px;top:1779.0px;font-size:49px;color:#ffffff;-webkit-text-stroke:1.04px #ffffff;transform:scaleX(1.1447);">from</span>
<span id="t31" class="t " style="left:576.74px;top:1779.0px;font-size:49px;color:#ffffff;-webkit-text-stroke:1.0px #ffffff;transform:scaleX(1.1800);">common</span>
<span id="t32" class="t " style="left:811.02px;top:1779.0px;font-size:49px;color:#ffffff;-webkit-text-stroke:1.73px #ffffff;transform:scaleX(0.9102);">LiDAR</span>
<span id="t33" class="t " style="left:957.51px;top:1779.0px;font-size:49px;color:#ffffff;-webkit-text-stroke:1.02px #ffffff;transform:scaleX(1.1533);">formats</span>
<span id="t34" class="t " style="left:1655.30px;top:340.0px;font-size:21px;color:#6a6a6a;font-weight:700;letter-spacing:5.0px;transform:scaleX(0.8238);">LIDAR POINT CLOUD ACTIONS</span>
<span id="t35" class="t " style="left:1655.30px;top:479.0px;font-size:21px;color:#6a6a6a;font-weight:700;letter-spacing:5.0px;transform:scaleX(0.8238);">IMPORTED ASSET</span>
<span id="t36" class="t " style="left:1655.30px;top:662.0px;font-size:21px;color:#6a6a6a;font-weight:700;letter-spacing:5.0px;transform:scaleX(0.8415);">COMMON</span>
<span id="t37" class="t " style="left:1655.30px;top:1074.0px;font-size:21px;color:#6a6a6a;font-weight:700;letter-spacing:5.0px;transform:scaleX(0.8185);">EXPLORE</span>
<span id="t38" class="t " style="left:1655.30px;top:1213.0px;font-size:21px;color:#6a6a6a;font-weight:700;letter-spacing:5.0px;transform:scaleX(0.8099);">REFERENCES</span>
<span id="t39" class="t " style="left:1734.00px;top:383.0px;font-size:29px;color:#eeeeee;-webkit-text-stroke:0.4px #eeeeee;transform:scaleX(0.9882);">Build Collision</span>
<span id="t40" class="t " style="left:1734.00px;top:429.0px;font-size:29px;color:#eeeeee;-webkit-text-stroke:0.4px #eeeeee;transform:scaleX(0.9758);">Calculate Normals</span>
<span id="t41" class="t " style="left:1734.00px;top:522.0px;font-size:29px;color:#737373;-webkit-text-stroke:0.4px #737373;transform:scaleX(0.9936);">Reimport</span>
<span id="t42" class="t " style="left:1734.00px;top:568.0px;font-size:29px;color:#737373;-webkit-text-stroke:0.4px #737373;transform:scaleX(0.9733);">Open Source Location</span>
<span id="t43" class="t " style="left:1734.00px;top:613.0px;font-size:29px;color:#737373;-webkit-text-stroke:0.4px #737373;transform:scaleX(0.9607);">Open In External Editor</span>
<span id="t44" class="t " style="left:1734.00px;top:706.0px;font-size:29px;color:#eeeeee;-webkit-text-stroke:0.4px #eeeeee;transform:scaleX(0.9574);">Edit...</span>
<span id="t45" class="t " style="left:1734.00px;top:752.0px;font-size:29px;color:#eeeeee;-webkit-text-stroke:0.4px #eeeeee;transform:scaleX(0.9532);">Rename</span>
<span id="t46" class="t " style="left:2187.60px;top:755.0px;font-size:21px;color:#a9a9a9;transform:scaleX(0.8851);">F2</span>
<span id="t47" class="t " style="left:1734.00px;top:798.0px;font-size:29px;color:#eeeeee;-webkit-text-stroke:0.4px #eeeeee;transform:scaleX(0.9983);">Duplicate</span>
<span id="t48" class="t " style="left:2132.60px;top:801.0px;font-size:21px;color:#a9a9a9;transform:scaleX(0.9322);">CTRL+D</span>
<span id="t49" class="t " style="left:1734.00px;top:843.0px;font-size:29px;color:#737373;-webkit-text-stroke:0.4px #737373;transform:scaleX(0.9227);">Save</span>
<span id="t50" class="t " style="left:2134.80px;top:846.0px;font-size:21px;color:#5e5e5e;transform:scaleX(0.9185);">CTRL+S</span>
<span id="t51" class="t " style="left:1734.00px;top:889.0px;font-size:29px;color:#eeeeee;-webkit-text-stroke:0.4px #eeeeee;transform:scaleX(0.9651);">Delete</span>
<span id="t52" class="t " style="left:2136.30px;top:892.0px;font-size:21px;color:#a9a9a9;transform:scaleX(0.8935);">DELETE</span>
<span id="t53" class="t " style="left:1734.00px;top:934.0px;font-size:29px;color:#eeeeee;-webkit-text-stroke:0.4px #eeeeee;transform:scaleX(1.0144);">Asset Actions</span>
<span id="t54" class="t " style="left:1734.00px;top:980.0px;font-size:29px;color:#eeeeee;-webkit-text-stroke:0.4px #eeeeee;transform:scaleX(0.9968);">Asset Localization</span>
<span id="t55" class="t " style="left:1734.00px;top:1026.0px;font-size:29px;color:#eeeeee;-webkit-text-stroke:0.4px #eeeeee;transform:scaleX(1.0072);">Scripted Asset Actions</span>
<span id="t56" class="t " style="left:1734.00px;top:1118.0px;font-size:29px;color:#eeeeee;-webkit-text-stroke:0.4px #eeeeee;transform:scaleX(0.9635);">Show in Folder View</span>
<span id="t57" class="t " style="left:2134.80px;top:1121.0px;font-size:21px;color:#a9a9a9;transform:scaleX(0.9185);">CTRL+B</span>
<span id="t58" class="t " style="left:1734.00px;top:1164.0px;font-size:29px;color:#eeeeee;-webkit-text-stroke:0.4px #eeeeee;transform:scaleX(0.9684);">Show in Explorer</span>
<span id="t59" class="t " style="left:1734.00px;top:1257.0px;font-size:29px;color:#eeeeee;-webkit-text-stroke:0.4px #eeeeee;transform:scaleX(0.9610);">Copy Reference</span>
<span id="t60" class="t " style="left:1734.00px;top:1302.0px;font-size:29px;color:#eeeeee;-webkit-text-stroke:0.4px #eeeeee;transform:scaleX(0.9527);">Copy File Path</span>
<span id="t61" class="t " style="left:1734.00px;top:1348.0px;font-size:29px;color:#eeeeee;-webkit-text-stroke:0.4px #eeeeee;transform:scaleX(0.9634);">Reference Viewer...</span>
<span id="t62" class="t " style="left:2078.20px;top:1351.0px;font-size:21px;color:#a9a9a9;transform:scaleX(0.9548);">ALT+SHIFT+R</span>
<span id="t63" class="t " style="left:1734.00px;top:1394.0px;font-size:29px;color:#eeeeee;-webkit-text-stroke:0.4px #eeeeee;transform:scaleX(0.9603);">Size Map...</span>
<span id="t64" class="t " style="left:2073.30px;top:1397.0px;font-size:21px;color:#a9a9a9;transform:scaleX(0.9739);">ALT+SHIFT+M</span>
<span id="t65" class="t " style="left:1734.00px;top:1439.0px;font-size:29px;color:#eeeeee;-webkit-text-stroke:0.4px #eeeeee;transform:scaleX(1.0083);">Audit Assets...</span>
<span id="t66" class="t " style="left:2078.20px;top:1442.0px;font-size:21px;color:#a9a9a9;transform:scaleX(0.9629);">ALT+SHIFT+A</span>
<span id="t67" class="t " style="left:1734.00px;top:1485.0px;font-size:29px;color:#eeeeee;-webkit-text-stroke:0.4px #eeeeee;transform:scaleX(0.9804);">Shader Cook Statistics...</span>
<span id="t68" class="t " style="left:1734.00px;top:1530.0px;font-size:29px;color:#eeeeee;-webkit-text-stroke:0.4px #eeeeee;transform:scaleX(0.9887);">Connect to Revision Control...</span>
<span id="t69" class="t " style="left:1734.00px;top:1576.0px;font-size:29px;color:#eeeeee;-webkit-text-stroke:0.4px #eeeeee;transform:scaleX(0.9798);">Open LidarPointCloud.h</span>
<span id="t70" class="t " style="left:2332.90px;top:1043.0px;font-size:29px;color:#ffffff;-webkit-text-stroke:0.4px #ffffff;transform:scaleX(0.9604);">Generate GPUTextures</span>
<span id="t71" class="t " style="left:2495.00px;top:1128.0px;font-size:24.5px;color:#1c1c1c;-webkit-text-stroke:0.35px #1c1c1c;transform:scaleX(1.0002);">Generate GPUTextures</span>
<span id="t72" class="t " style="left:2495.00px;top:1188.0px;font-size:24.5px;color:#1c1c1c;-webkit-text-stroke:0.35px #1c1c1c;transform:scaleX(1.0895);">(Shift-click to edit script)</span></div>
<svg class="abs" style="left:0;top:0" width="3840" height="2160" viewBox="0 0 3840 2160">
<path d="M2451.800 1061.300v38.400l8.500-7.200 6.100 11 6.100-1.100-3.900-10.800 12.100-1.100Z" fill="#ffffff" stroke="#0a0a14" stroke-width="1.600" stroke-linejoin="miter"/>
<g stroke="#ffffff" stroke-width="2"><path d="M2635.400 1049.300H2839"/><path d="M1180.600 1805H1477"/></g>
<g fill="#ffffff"><circle cx="2635.400" cy="1049.300" r="5"/><circle cx="2839" cy="1049.300" r="5"/><circle cx="1180.600" cy="1805" r="5"/><circle cx="1477" cy="1805" r="5"/></g>
</svg>
</body></html>
